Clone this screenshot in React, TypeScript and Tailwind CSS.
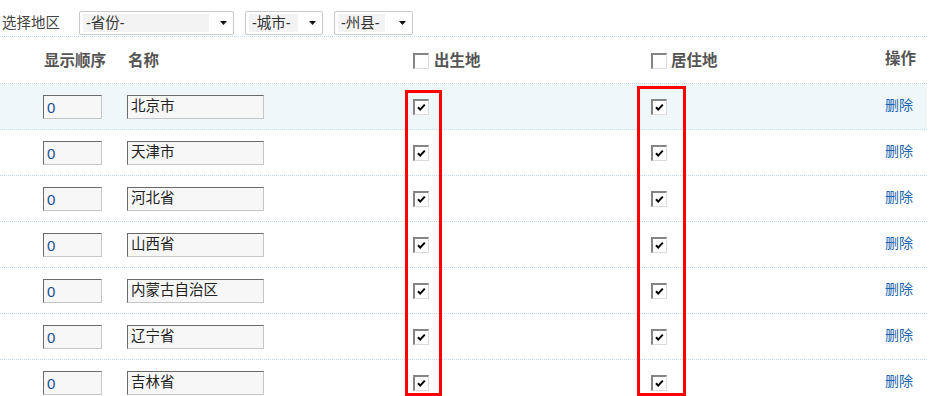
const regions = ["北京市", "天津市", "河北省", "山西省", "内蒙古自治区", "辽宁省", "吉林省"];

const Check = ({ checked }: { checked: boolean }) => (
  <span className="inline-flex w-4 h-4 bg-white border-t-2 border-l-2 border-t-[#858585] border-l-[#858585] border-b border-r border-b-[#dcdcdc] border-r-[#dcdcdc]">
    {checked && (
      <svg viewBox="0 0 13 13" className="w-[13px] h-[13px]">
        <path d="M3 6.2 L5.2 8.6 L9.8 3.6" fill="none" stroke="#000" strokeWidth="2" />
      </svg>
    )}
  </span>
);

const Select = ({ label, width, textWidth }: { label: string; width: string; textWidth: string }) => (
  <div className={`${width} h-[24px] flex items-center justify-between bg-white border border-[#c9c9c9] rounded-[2px] pl-[3px] pr-[6px]`}>
    <span className={`${textWidth} h-[18px] bg-[#f3f3f3] pl-[3px] text-[14.5px] leading-[18px] text-[#333]`}>{label}</span>
    <svg viewBox="0 0 7 4" className="w-[7px] h-[4px]">
      <path d="M0 0 H7 L3.5 4 Z" fill="#111" />
    </svg>
  </div>
);

const Field = ({ value, width, blue }: { value: string; width: string; blue?: boolean }) => (
  <div
    className={`${width} h-[24px] bg-[#f7f7f7] border border-t-[#6a6a6a] border-l-[#6a6a6a] border-b-[#c6c6c6] border-r-[#c6c6c6] pl-[3px] ${
      blue ? "text-[15px] leading-[24px] text-[#1d4f96]" : "text-[14.5px] leading-[18px] pt-[1px] text-[#222]"
    }`}
  >
    {value}
  </div>
);

const App = () => (
  <div className="relative w-[933px] h-[396px] overflow-hidden bg-white font-['Liberation_Sans','Noto_Sans_CJK_SC',sans-serif]">
    <div className="w-[927px]">
      <div className="h-[37px] flex items-end pb-[1px] border-b border-dotted border-[#c3dcee]">
        <span className="w-[79px] pl-[2px] leading-[22px] mb-[1px] text-[14.5px] text-[#444]">选择地区</span>
        <div className="flex gap-[11px]">
          <Select label="-省份-" width="w-[155px]" textWidth="w-[126px]" />
          <Select label="-城市-" width="w-[78px]" textWidth="w-[49px]" />
          <Select label="-州县-" width="w-[79px]" textWidth="w-[47px]" />
        </div>
      </div>

      <div className="h-[47px] grid grid-cols-[127px_286px_238px_234px_1fr] items-center pt-[2px] border-b border-dotted border-[#c3dcee] text-[15.5px] font-bold text-[#555]">
        <span className="pl-[44px]">显示顺序</span>
        <span className="pl-[1px]">名称</span>
        <span className="flex items-center gap-[5px]">
          <Check checked={false} />
          出生地
        </span>
        <span className="flex items-center gap-[4px]">
          <Check checked={false} />
          居住地
        </span>
        <span className="-mt-[4px]">操作</span>
      </div>

      {regions.map((name, i) => (
        <div
          key={name}
          className={`h-[46px] grid grid-cols-[127px_286px_238px_234px_1fr] items-center border-b border-dotted border-[#c3dcee] ${
            i === 0 ? "bg-[#eff7fb]" : ""
          }`}
        >
          <div className="pl-[43px]">
            <Field value="0" width="w-[59px]" blue />
          </div>
          <Field value={name} width="w-[137px]" />
          <Check checked />
          <Check checked />
          <a className="text-[14px] text-[#2064ac] -mt-[2px] cursor-pointer">删除</a>
        </div>
      ))}
    </div>

    <div className="absolute left-[405px] top-[90px] w-[37px] h-[306px] border-[3px] border-[#ff0000]" />
    <div className="absolute left-[637px] top-[86px] w-[49px] h-[310px] border-[3px] border-[#ff0000]" />
  </div>
);

export default App;
